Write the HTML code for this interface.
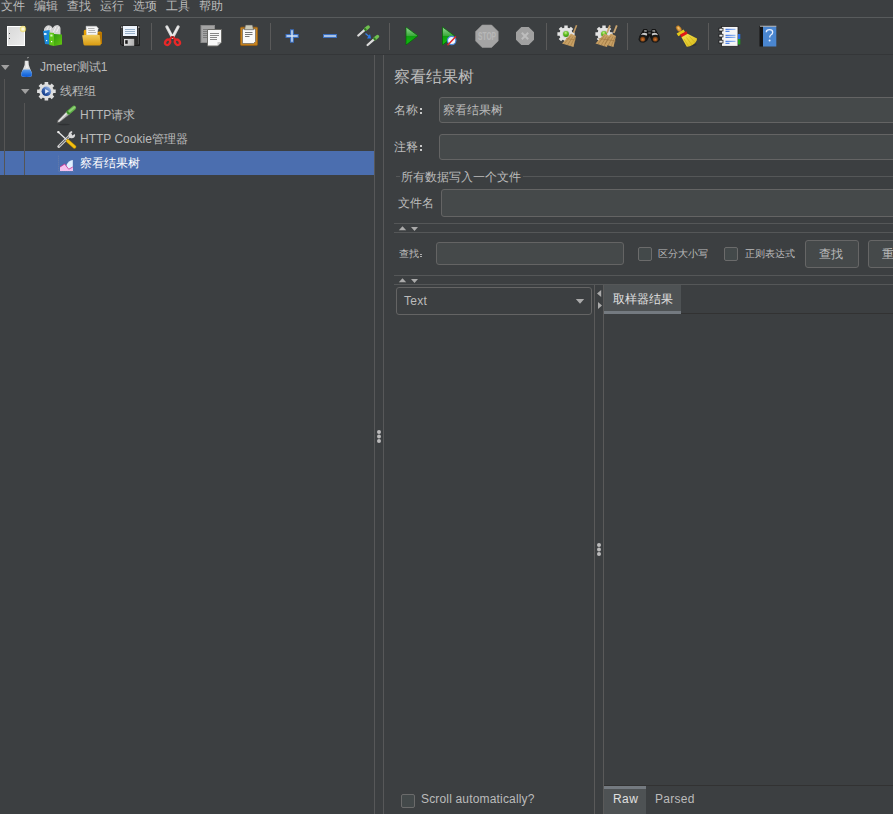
<!DOCTYPE html>
<html><head><meta charset="utf-8">
<style>
*{box-sizing:border-box}
html,body{margin:0;padding:0;width:893px;height:814px;overflow:hidden;background:#3c3f41;font-family:"Liberation Sans",sans-serif;color:#bbbbbb;font-size:12px}
.a{position:absolute;white-space:nowrap}
.hl{position:absolute;height:1px;background:#555758}
.vl{position:absolute;width:1px;background:#5a5a5a}
.ic{position:absolute;top:24px;width:24px;height:24px}
.inp{position:absolute;background:#45494a;border:1px solid #646464;border-radius:3px}
.cb{position:absolute;width:14px;height:14px;background:#43494a;border:1px solid #6b6b6b;border-radius:2px}
.tri{position:absolute;width:0;height:0}
</style></head><body>
<!-- menu -->
<div class="a" style="left:1px;top:-2px;font-size:12px;line-height:16px;color:#bbbbbb">文件</div>
<div class="a" style="left:34px;top:-2px;line-height:16px">编辑</div>
<div class="a" style="left:67px;top:-2px;line-height:16px">查找</div>
<div class="a" style="left:100px;top:-2px;line-height:16px">运行</div>
<div class="a" style="left:133px;top:-2px;line-height:16px">选项</div>
<div class="a" style="left:166px;top:-2px;line-height:16px">工具</div>
<div class="a" style="left:199px;top:-2px;line-height:16px">帮助</div>
<div class="hl" style="left:0;top:17px;width:893px;background:#585b5c"></div>
<div class="hl" style="left:0;top:54px;width:893px;background:#343638"></div>

<!-- toolbar separators -->
<div class="vl" style="left:151px;top:23px;height:27px"></div>
<div class="vl" style="left:270px;top:23px;height:27px"></div>
<div class="vl" style="left:389px;top:23px;height:27px"></div>
<div class="vl" style="left:546px;top:23px;height:27px"></div>
<div class="vl" style="left:627px;top:23px;height:27px"></div>
<div class="vl" style="left:708px;top:23px;height:27px"></div>

<!-- tree -->
<div class="a" style="left:0;top:151px;width:374px;height:24px;background:#4b6eaf"></div>
<div class="vl" style="left:4px;top:79px;height:96px;background:#555555"></div>
<div class="vl" style="left:24px;top:103px;height:72px;background:#555555"></div>
<div class="a" style="left:40px;top:59px;line-height:16px">Jmeter测试1</div>
<div class="a" style="left:60px;top:83px;line-height:16px">线程组</div>
<div class="a" style="left:80px;top:107px;line-height:16px">HTTP请求</div>
<div class="a" style="left:80px;top:131px;line-height:16px">HTTP Cookie管理器</div>
<div class="a" style="left:80px;top:155px;line-height:16px;color:#ffffff">察看结果树</div>

<!-- splitter -->
<div class="vl" style="left:374px;top:55px;height:759px;background:#575859"></div>
<div class="vl" style="left:383px;top:55px;height:759px;background:#575859"></div>

<!-- right panel -->
<div class="a" style="left:394px;top:67px;font-size:16px;line-height:20px">察看结果树</div>
<div class="a" style="left:394px;top:102px;line-height:16px">名称</div><div class="a" style="left:420px;top:108px;width:2px;height:2px;background:#c8c8c8"></div><div class="a" style="left:420px;top:112px;width:2px;height:2px;background:#c8c8c8"></div>
<div class="inp" style="left:439px;top:97px;width:470px;height:26px"></div>
<div class="a" style="left:443px;top:102px;line-height:16px">察看结果树</div>
<div class="a" style="left:394px;top:139px;line-height:16px">注释</div><div class="a" style="left:420px;top:145px;width:2px;height:2px;background:#c8c8c8"></div><div class="a" style="left:420px;top:149px;width:2px;height:2px;background:#c8c8c8"></div>
<div class="inp" style="left:439px;top:134px;width:470px;height:26px"></div>

<!-- group -->
<div class="hl" style="left:396px;top:176px;width:4px;background:#555758"></div>
<div class="hl" style="left:523px;top:176px;width:370px;background:#555758"></div>
<div class="a" style="left:401px;top:169px;line-height:16px">所有数据写入一个文件</div>
<div class="a" style="left:398px;top:195px;line-height:16px">文件名</div>
<div class="inp" style="left:441px;top:189px;width:470px;height:28px"></div>

<div class="hl" style="left:394px;top:223px;width:499px"></div>
<div class="hl" style="left:394px;top:232px;width:499px"></div>
<svg class="a" style="left:398px;top:225px" width="22" height="8"><path d="M0.8 5.2 L4.5 1.2 L8.2 5.2 Z M13 2 L20 2 L16.5 6 Z" fill="#aaaaaa"/></svg>

<!-- search -->
<div class="a" style="left:399px;top:247px;font-size:10px;line-height:14px">查找</div><div class="a" style="left:420px;top:254px;width:2px;height:1px;background:#b0b0b0"></div><div class="a" style="left:420px;top:256px;width:2px;height:1px;background:#b0b0b0"></div>
<div class="inp" style="left:436px;top:242px;width:188px;height:23px"></div>
<div class="cb" style="left:638px;top:247px"></div>
<div class="a" style="left:658px;top:247px;font-size:10px;line-height:14px">区分大小写</div>
<div class="cb" style="left:724px;top:247px"></div>
<div class="a" style="left:745px;top:247px;font-size:10px;line-height:14px">正则表达式</div>
<div class="a" style="left:805px;top:240px;width:54px;height:28px;border:1px solid #666666;border-radius:3px;background:#45494a"></div>
<div class="a" style="left:819px;top:246px;font-size:12px;line-height:16px">查找</div>
<div class="a" style="left:868px;top:240px;width:54px;height:28px;border:1px solid #666666;border-radius:3px;background:#45494a"></div>
<div class="a" style="left:882px;top:246px;font-size:12px;line-height:16px">重置</div>

<div class="hl" style="left:394px;top:275px;width:499px"></div>
<div class="hl" style="left:394px;top:284px;width:499px"></div>
<svg class="a" style="left:398px;top:277px" width="22" height="8"><path d="M0.8 5.2 L4.5 1.2 L8.2 5.2 Z M13 2 L20 2 L16.5 6 Z" fill="#aaaaaa"/></svg>

<!-- combo -->
<div class="a" style="left:396px;top:287px;width:196px;height:28px;border:1px solid #646464;border-radius:3px;background:#3c3f41"></div>
<div class="a" style="left:404px;top:293px;line-height:16px;letter-spacing:0.3px">Text</div>
<svg class="a" style="left:574px;top:297px" width="12" height="8"><path d="M1.8 2 L10.2 2 L6 6.8 Z" fill="#aaaaaa"/></svg>

<div class="vl" style="left:594px;top:285px;height:529px"></div>
<div class="vl" style="left:603px;top:285px;height:529px"></div>
<svg class="a" style="left:595px;top:288px" width="8" height="24"><path d="M6.2 2 L6.2 9 L2 5.5 Z M3 14 L3 21 L7 17.5 Z" fill="#aaaaaa"/></svg>

<!-- tab -->
<div class="a" style="left:604px;top:285px;width:77px;height:26px;background:#4e5254"></div>
<div class="a" style="left:604px;top:311px;width:77px;height:3px;background:#747a80"></div>
<div class="hl" style="left:681px;top:313px;width:212px;background:#323232"></div>
<div class="a" style="left:613px;top:291px;line-height:16px;color:#e0e0e0">取样器结果</div>

<div class="hl" style="left:604px;top:785px;width:289px;background:#323232"></div>
<div class="a" style="left:604px;top:786px;width:42px;height:28px;background:#4e5254"></div>
<div class="a" style="left:604px;top:786px;width:42px;height:3px;background:#747a80"></div>
<div class="a" style="left:613px;top:791px;line-height:16px;color:#e0e0e0;letter-spacing:0.4px">Raw</div>
<div class="a" style="left:655px;top:791px;line-height:16px;letter-spacing:0.3px">Parsed</div>

<div class="cb" style="left:401px;top:794px"></div>
<div class="a" style="left:421px;top:791px;line-height:16px;letter-spacing:0.17px">Scroll automatically?</div>

<!-- splitter dots -->
<svg class="a" style="left:376px;top:429px" width="6" height="15"><circle cx="3" cy="3" r="2" fill="#bbbbbb"/><circle cx="3" cy="7.5" r="2" fill="#bbbbbb"/><circle cx="3" cy="12" r="2" fill="#bbbbbb"/></svg>
<svg class="a" style="left:596px;top:542px" width="6" height="15"><circle cx="3" cy="3" r="2" fill="#bbbbbb"/><circle cx="3" cy="7.5" r="2" fill="#bbbbbb"/><circle cx="3" cy="12" r="2" fill="#bbbbbb"/></svg>

<!-- tree triangles -->
<svg class="a" style="left:0;top:63px" width="11" height="8"><path d="M1 2 L9.5 2 L5.25 7 Z" fill="#a0a0a0"/></svg>
<svg class="a" style="left:20px;top:87px" width="11" height="8"><path d="M1 2 L9.5 2 L5.25 7 Z" fill="#a0a0a0"/></svg>

<svg class="a" style="left:0;top:0" width="893" height="180" viewBox="0 0 893 180">
<defs>
<linearGradient id="gPage" x1="0" y1="0" x2="1" y2="1"><stop offset="0" stop-color="#d8d8d8"/><stop offset="1" stop-color="#ececec"/></linearGradient>
<linearGradient id="gFold" x1="0" y1="0" x2="0" y2="1"><stop offset="0" stop-color="#f2cc5a"/><stop offset="1" stop-color="#d89a10"/></linearGradient>
<linearGradient id="gPlay" x1="0" y1="0" x2="0" y2="1"><stop offset="0" stop-color="#98d898"/><stop offset="0.5" stop-color="#38a838"/><stop offset="0.52" stop-color="#10a010"/><stop offset="1" stop-color="#10c010"/></linearGradient>
<linearGradient id="gGreen" x1="0" y1="0" x2="1" y2="1"><stop offset="0" stop-color="#2e9a10"/><stop offset="1" stop-color="#68c810"/></linearGradient>
<linearGradient id="gFlask" x1="0" y1="0" x2="0" y2="1"><stop offset="0" stop-color="#5c9ae8"/><stop offset="0.6" stop-color="#2070e0"/><stop offset="1" stop-color="#0a58d8"/></linearGradient>
<linearGradient id="gBlueBall" x1="0.1" y1="0.9" x2="0.8" y2="0.1"><stop offset="0" stop-color="#0e3580"/><stop offset="0.5" stop-color="#3a64b0"/><stop offset="1" stop-color="#9ab8e8"/></linearGradient>
<linearGradient id="gShut" x1="0" y1="0" x2="1" y2="0"><stop offset="0" stop-color="#e0e0e0"/><stop offset="1" stop-color="#b0b0b0"/></linearGradient>
<linearGradient id="gLine" x1="0" y1="0" x2="1" y2="0"><stop offset="0" stop-color="#1a5ae0"/><stop offset="1" stop-color="#8ab4f0"/></linearGradient>
<radialGradient id="gBall" cx="0.45" cy="0.3" r="0.7"><stop offset="0" stop-color="#c8f090"/><stop offset="0.5" stop-color="#60c020"/><stop offset="1" stop-color="#3a9010"/></radialGradient>
<radialGradient id="gLens" cx="0.5" cy="0.6" r="0.6"><stop offset="0" stop-color="#d07838"/><stop offset="0.6" stop-color="#904a14"/><stop offset="1" stop-color="#4a2808"/></radialGradient>
<linearGradient id="gBroom" x1="0" y1="0" x2="1" y2="1"><stop offset="0" stop-color="#f4e450"/><stop offset="1" stop-color="#d8b818"/></linearGradient>
<radialGradient id="gStar"><stop offset="0" stop-color="#ffffff"/><stop offset="0.5" stop-color="#f8f0b0"/><stop offset="1" stop-color="#e8d040" stop-opacity="0.6"/></radialGradient>
</defs>
<!-- 1 new -->
<rect x="7.5" y="26.5" width="17" height="19" fill="url(#gPage)" stroke="#ffffff" stroke-width="1"/>
<circle cx="23" cy="29" r="3.2" fill="url(#gStar)"/>
<rect x="9" y="33" width="1" height="1" fill="#555"/><rect x="9" y="38" width="1" height="1" fill="#555"/>
<!-- 2 templates -->
<path d="M44 33 L44 29 Q45.5 25.5 49 25.2 Q51.5 25.5 52.5 28 Q54.5 24.8 57.5 25 Q60.3 25.5 60.5 28.5 L60.5 35 L44 35 Z" fill="#d2d2d2"/>
<path d="M46 32 L48.5 26.5 M49 32 L51 27.5 M53.5 32 L56 26.5 M56.5 32 L59 27" stroke="#f4f4f4" stroke-width="0.9"/>
<path d="M43 31 L49.7 30 L49.7 44.5 L45 44 Z" fill="#1a88d8"/>
<rect x="44" y="33" width="2.5" height="2" fill="#d8ecff"/><rect x="46" y="40" width="1.2" height="1.2" fill="#fff"/>
<path d="M49.3 32.5 L54 33 L54 46 L49.3 45 Z" fill="#60c818"/>
<path d="M54 34 L62 34.5 L62 44.5 L54 46 Z" fill="url(#gGreen)"/>
<rect x="50.3" y="34.5" width="2.2" height="2" fill="#d8f8c0"/><rect x="51" y="41" width="1.2" height="1.2" fill="#fff"/>
<!-- 3 open -->
<path d="M83.8 44 L83.8 31 Q84 29.8 85.5 29.8 L89.5 29.6 L90.5 34 L99.5 31.5 Q101.8 31.2 101.8 33 L101.8 44 Z" fill="#e8a000"/>
<path d="M97 33 L101.8 32 L101.8 44 L99 44 Z" fill="#b87400"/>
<path d="M86 26.2 L96.5 26.2 L98.2 28.2 L97.2 35 L86.5 35 Z" fill="#f6f6f6" stroke="#c8c8c8" stroke-width="0.4"/>
<rect x="88" y="28" width="6.5" height="1" fill="#b4b4b4"/><rect x="88.5" y="30" width="6.5" height="1" fill="#b4b4b4"/><rect x="88" y="32" width="8" height="1" fill="#b4b4b4"/>
<path d="M82.2 35.2 Q90 34.4 99.6 35 L100.9 44 Q101 45.6 99.5 45.6 L85 45.6 Q83.8 45.6 83.6 44.5 Z" fill="url(#gFold)"/>
<!-- 4 save -->
<path d="M121 26 L139.5 26 L139.5 45.5 L122 45.5 L120.5 44 Z" fill="#2a2a2a" stroke="#161616" stroke-width="0.8"/>
<path d="M121.8 28 L121.8 44 M138.5 28 L138.5 44" stroke="#4a4a4a" stroke-width="1"/>
<rect x="121" y="26.5" width="1.5" height="1.2" fill="#cccccc"/><rect x="138" y="26.5" width="1.5" height="1.2" fill="#cccccc"/>
<rect x="123" y="26" width="14" height="10" fill="#eef4fc"/>
<rect x="125" y="29" width="10" height="1" fill="#98b0c8"/><rect x="125" y="31" width="10" height="1" fill="#98b0c8"/><rect x="125" y="33" width="10" height="1" fill="#98b0c8"/>
<rect x="123.2" y="37.8" width="11" height="1" fill="#444"/>
<rect x="124" y="39" width="10.2" height="6.8" fill="url(#gShut)"/>
<rect x="125.2" y="40.2" width="2.5" height="3.6" fill="#1a1a1a"/>
<!-- 5 cut -->
<path d="M166.8 26.8 L172.5 37.5 M178.2 26.8 L172.5 37.5" stroke="#d4d4d4" stroke-width="3" stroke-linecap="round"/>
<path d="M167 27 L172.3 36.5 M178 27 L172.7 36.5" stroke="#f0f0f0" stroke-width="1.2" stroke-linecap="round"/>
<path d="M172.5 36.5 L169.5 39.5 M172.5 36.5 L175.5 39.5" stroke="#e02020" stroke-width="2.2"/>
<ellipse cx="167.6" cy="42.3" rx="2.3" ry="2.9" transform="rotate(35 167.6 42.3)" fill="none" stroke="#e82828" stroke-width="2.3"/>
<ellipse cx="177.4" cy="42.3" rx="2.3" ry="2.9" transform="rotate(-35 177.4 42.3)" fill="none" stroke="#e82828" stroke-width="2.3"/>
<circle cx="172.5" cy="37" r="0.7" fill="#333"/>
<!-- 6 copy -->
<rect x="201" y="25.5" width="13.5" height="17" fill="#a4a4a4" stroke="#8a8a8a" stroke-width="1"/>
<rect x="203" y="29" width="5" height="0.9" fill="#777"/><rect x="203" y="31" width="5" height="0.9" fill="#777"/><rect x="203" y="33" width="5" height="0.9" fill="#777"/><rect x="203" y="35" width="5" height="0.9" fill="#777"/><rect x="203" y="37" width="5" height="0.9" fill="#777"/>
<path d="M207.5 29.5 L221.5 29.5 L221.5 42 L217.5 46 L207.5 46 Z" fill="#f8f8f8" stroke="#6a6a66" stroke-width="1"/>
<path d="M217.5 46 L217.5 42 L221.5 42 Z" fill="#c8c8c8"/>
<rect x="210" y="33" width="9" height="1" fill="#888"/><rect x="210" y="35" width="9" height="1" fill="#888"/><rect x="210" y="37" width="7" height="1" fill="#888"/><rect x="210" y="39" width="7" height="1" fill="#888"/>
<!-- 7 paste -->
<rect x="240.5" y="27.2" width="17" height="18.2" rx="1" fill="#c88420" stroke="#9a6010" stroke-width="0.8"/>
<path d="M242.5 29 L255.5 29 L255.5 41.5 L253.5 43.5 L242.5 43.5 Z" fill="#fafafa" stroke="#555" stroke-width="0.6"/>
<path d="M245.5 25 L252.5 25 L253.5 29.7 L244.5 29.7 Z" fill="#c8c8b8" stroke="#555" stroke-width="0.6"/>
<rect x="245" y="32" width="7.5" height="1" fill="#777"/><rect x="245" y="34" width="7.5" height="1" fill="#777"/><rect x="245" y="36" width="4.5" height="1" fill="#777"/>
<!-- 8 plus -->
<path d="M285.5 34 H298.7 V38 H293.9 V42.7 H290 V38 H285.5 Z M290 29.2 H293.9 V34 H290 Z" fill="#3b6fc0"/>
<path d="M286.5 35.3 H297.7 V36.7 H286.5 Z M291.3 30.2 H292.7 V41.7 H291.3 Z" fill="#d8e6f6"/>
<!-- 9 minus -->
<rect x="323" y="34" width="14" height="4" fill="#3b6fc0"/>
<rect x="324" y="35.3" width="12" height="1.4" fill="#d8e6f6"/>
<!-- 10 toggle -->
<path d="M358.3 35.5 L365 29.6" stroke="#dcdcdc" stroke-width="2.3" stroke-linecap="round"/>
<path d="M365.6 29.1 L368.2 27" stroke="#70c050" stroke-width="3.4" stroke-linecap="round"/>
<path d="M364.6 30 L366 28.8" stroke="#2e7a20" stroke-width="2.6"/>
<path d="M367.6 45 L374.3 39.1" stroke="#dcdcdc" stroke-width="2.3" stroke-linecap="round"/>
<path d="M374.9 38.6 L377.5 36.5" stroke="#70c050" stroke-width="3.4" stroke-linecap="round"/>
<path d="M373.9 39.5 L375.3 38.3" stroke="#2e7a20" stroke-width="2.6"/>
<path d="M365.5 33.5 L369 36.5" stroke="#3a80e0" stroke-width="1.3"/>
<path d="M367 38.5 L371 38.5 L370 34 Z" fill="#2a78f0"/>
<!-- 11 start -->
<path d="M406 27 L418 35.8 L406 45 Z" fill="url(#gPlay)" stroke="#006a00" stroke-width="0.7"/>
<!-- 12 start no timers -->
<path d="M442.5 27 L454.5 35.8 L442.5 45 Z" fill="url(#gPlay)" stroke="#006a00" stroke-width="0.7"/>
<circle cx="451.7" cy="40.5" r="4.2" fill="#f4f8ff" stroke="#4a88d8" stroke-width="1.2"/>
<path d="M447.5 45.3 L455.9 36.4" stroke="#e02828" stroke-width="1.5"/>
<!-- 13 stop -->
<path d="M482.2 25 L491.6 25 L498.2 31.6 L498.2 40.9 L491.6 47.5 L482.2 47.5 L475.6 40.9 L475.6 31.6 Z" fill="#a4a4a4" stroke="#989898" stroke-width="0.6"/>
<text x="487" y="40" font-family="Liberation Sans" font-weight="bold" font-size="10" fill="#b8b8b8" text-anchor="middle" textLength="18" lengthAdjust="spacingAndGlyphs">STOP</text>
<!-- 14 shutdown -->
<path d="M521.3 27 L528.7 27 L534 32.3 L534 39.7 L528.7 45 L521.3 45 L516 39.7 L516 32.3 Z" fill="#a0a0a0"/>
<path d="M521.8 32.8 L528.2 39.2 M528.2 32.8 L521.8 39.2" stroke="#bdbdbd" stroke-width="2"/>
<!-- 15 clear -->
<g transform="translate(566 34)"><circle r="6.6" fill="#e4e4e4"/>
<path d="M-1.7 -8.6 H1.7 V8.6 H-1.7 Z M-8.6 -1.7 V1.7 H8.6 V-1.7 Z" fill="#e4e4e4"/>
<path d="M-1.7 -8.6 H1.7 V8.6 H-1.7 Z M-8.6 -1.7 V1.7 H8.6 V-1.7 Z" fill="#e4e4e4" transform="rotate(45)"/>
<circle r="4" fill="#d4d4d8"/><circle r="2.9" fill="url(#gBall)"/></g>
<path d="M576.6 25.3 L573.5 33" stroke="#c09860" stroke-width="1.6"/>
<path d="M571 33.5 L576 36 L573.5 46.9 L562 43.5 Z" fill="#c8a064"/>
<path d="M564.5 43.5 L571 35.5 M567.5 45 L573 36.5 M570.5 46 L575 37 M566 38.5 L576 40" stroke="#a07840" stroke-width="0.6"/>
<!-- 16 clear all -->
<g transform="translate(604 34)"><circle r="6.6" fill="#e4e4e4"/>
<path d="M-1.7 -8.6 H1.7 V8.6 H-1.7 Z M-8.6 -1.7 V1.7 H8.6 V-1.7 Z" fill="#e4e4e4"/>
<path d="M-1.7 -8.6 H1.7 V8.6 H-1.7 Z M-8.6 -1.7 V1.7 H8.6 V-1.7 Z" fill="#e4e4e4" transform="rotate(45)"/>
<circle r="4" fill="#d4d4d8"/><circle r="2.9" fill="url(#gBall)"/></g>
<path d="M610 25.3 L607 33" stroke="#c8a470" stroke-width="1.8"/>
<path d="M616.8 25.3 L613.8 33" stroke="#c8a470" stroke-width="1.8"/>
<path d="M604.5 33.5 L609.5 36 L607 46.9 L595.5 43.5 Z" fill="#c8a064"/>
<path d="M611 33.5 L616 36 L613.5 46.9 L602 43.5 Z" fill="#c8a064"/>
<path d="M598 44 L604.5 35.5 M601 45.5 L606.5 36.5 M604 46.5 L608.5 37 M605 44 L611 35.5 M608 45.5 L613 36.5 M611 46.5 L615 37 M598.5 38.5 L616 41" stroke="#9a7440" stroke-width="0.6"/>
<!-- 17 binoculars -->
<path d="M643.5 29 L647 29 L648.2 31.5 L650.8 31.5 L652 29 L655.5 29 L659.5 36 L660 40 L656 42.5 L652 41 L649.5 36 L647 41 L643 42.5 L638.5 40 L639.5 36 Z" fill="#141414"/>
<path d="M644 30.2 L646.6 30.2 L647 31.5 L644.5 31.8 Z M652.4 30.2 L655 30.2 L655.3 31.8 L652.2 31.5 Z" fill="#a8a8a8"/>
<path d="M640.8 35.2 Q642 32.8 644.5 32.8 L647.2 33.5 L647 35.5 Z M658.2 35.2 Q657 32.8 654.5 32.8 L651.8 33.5 L652 35.5 Z" fill="#c8c8c8"/>

<circle cx="642.7" cy="38.7" r="3.9" fill="#1a1a1a"/><circle cx="655.3" cy="38.7" r="3.9" fill="#1a1a1a"/>
<circle cx="642.7" cy="39" r="2.6" fill="url(#gLens)"/><circle cx="655.3" cy="39" r="2.6" fill="url(#gLens)"/>
<path d="M647.5 31.5 L651.5 31.5 L651 35.5 L648 35.5 Z" fill="#141414"/><rect x="648.3" y="32.5" width="2.4" height="1" fill="#8a8a8a"/>
<!-- 18 broom -->
<ellipse cx="690.5" cy="44.5" rx="6" ry="1.8" fill="#2a2c2e" opacity="0.6"/>
<ellipse cx="678.8" cy="28.6" rx="2.1" ry="3.1" transform="rotate(-35 678.8 28.6)" fill="#d89838" stroke="#b07020" stroke-width="0.6"/>
<ellipse cx="678.6" cy="28.3" rx="0.8" ry="1.6" transform="rotate(-35 678.6 28.3)" fill="#f0c070"/>
<path d="M676.6 33.6 L683.6 29.6 L685.2 32.2 L678.4 36.2 Z" fill="#e4c818"/>
<path d="M680 34.6 L686.4 31.2 L687.6 34 L681.6 37.4 Z" fill="#e01818"/>
<path d="M681.5 37.2 L687.6 33.8 L697 38.6 Q697.2 42 692.5 45 Q689 47 686.5 46.6 Z" fill="url(#gBroom)"/>
<path d="M684 39 L688.5 46 M686.5 37.5 L692 45 M689.5 36.5 L695 42.5" stroke="#c8a810" stroke-width="0.6"/>
<!-- 19 function helper -->
<rect x="721.5" y="26.5" width="16.5" height="19.8" fill="#f6f6f6" stroke="#222" stroke-width="0.8"/>
<rect x="738" y="34" width="2.3" height="5" fill="#2a70e0"/><rect x="738" y="39" width="2.3" height="5.5" fill="#20a020"/>
<rect x="719" y="28.2" width="4" height="2.8" fill="#e8e8e8" stroke="#111" stroke-width="0.7"/>
<rect x="719" y="34.2" width="4" height="2.8" fill="#e8e8e8" stroke="#111" stroke-width="0.7"/>
<rect x="719" y="40.2" width="4" height="2.8" fill="#e8e8e8" stroke="#111" stroke-width="0.7"/>
<rect x="725.5" y="28.8" width="10" height="1" fill="url(#gLine)"/><rect x="725.5" y="30.8" width="4" height="1" fill="#2a6ae0"/>
<rect x="725.5" y="34.8" width="10" height="1" fill="url(#gLine)"/><rect x="725.5" y="36.8" width="10" height="1" fill="url(#gLine)"/>
<rect x="725.5" y="40.8" width="10" height="1" fill="url(#gLine)"/><rect x="725.5" y="42.8" width="4" height="1" fill="#2a6ae0"/>
<!-- 20 help -->
<rect x="759.5" y="26" width="3.5" height="20.5" fill="#141414"/>
<rect x="763" y="26.5" width="13.3" height="20" fill="#4a86d0"/>
<rect x="760" y="25.8" width="16.3" height="0.8" fill="#d8d8d8"/>
<path d="M766.3 32.2 Q766.3 29.6 769.5 29.6 Q772.7 29.6 772.7 32.2 Q772.7 34 770.8 35 Q769.7 35.6 769.7 37.6" fill="none" stroke="#e8f0ff" stroke-width="1.3"/>
<circle cx="769.6" cy="40.6" r="1" fill="#e8f0ff"/>

<!-- tree icons -->
<path d="M24.8 60.8 L28.5 60.8 L28.8 65 Q29.8 68 31.5 72 Q32.6 74.8 31.5 76.2 Q30.5 77 26.6 77 Q22.6 77 21.6 76.2 Q20.6 74.8 21.7 72 Q23.5 68 24.6 65 Z" fill="#dedede"/>
<path d="M26.5 61 L27.2 61 L27.6 68 L26.3 68 Z" fill="#f8f8f8"/>
<path d="M23.4 69.6 L30 69.6 Q30.8 71 31.5 72 Q32.6 74.8 31.5 76.2 Q30.5 77 26.6 77 Q22.6 77 21.6 76.2 Q20.6 74.8 21.7 72 Q22.4 71 23.4 69.6 Z" fill="url(#gFlask)"/>
<path d="M27 58 L28.8 57.3" stroke="#9a9a9a" stroke-width="1"/>
<g transform="translate(46.4 91.3)"><circle r="7.2" fill="#dedede"/>
<path d="M-1.8 -9.3 H1.8 V9.3 H-1.8 Z M-9.3 -1.8 V1.8 H9.3 V-1.8 Z" fill="#dedede" transform="rotate(0)"/>
<path d="M-1.8 -9.3 H1.8 V9.3 H-1.8 Z M-9.3 -1.8 V1.8 H9.3 V-1.8 Z" fill="#dedede" transform="rotate(45)"/>
<circle r="4.8" fill="url(#gBlueBall)"/>
<path d="M-1.3 -2.4 L2.7 0 L-1.3 2.4 Z" fill="#e4ecf8"/></g>
<ellipse cx="64" cy="124.5" rx="6" ry="0.8" fill="#2a2c2e" opacity="0.7"/>
<path d="M57 122.8 L57.8 120.6 L66.6 111.3 L69.7 114.2 L59.6 122.3 Z" fill="#c8c8c8" stroke="#4a4a4a" stroke-width="0.6"/>
<path d="M59 120.8 L67.5 112.5" stroke="#f0f0f0" stroke-width="0.9"/>
<path d="M61 121 L68.5 113.8" stroke="#8a8a8a" stroke-width="0.6" stroke-dasharray="1 0.8"/>
<path d="M68.6 112.4 L73.9 107.9" stroke="#60b048" stroke-width="4.4" stroke-linecap="round"/>
<path d="M69.5 111.2 L74.5 107.2" stroke="#90d078" stroke-width="2" stroke-linecap="round"/>
<path d="M66.6 111.2 L69.6 114.2" stroke="#3a8a28" stroke-width="1.4"/>
<path d="M58.8 146.5 L70.5 135" stroke="#cfcfcf" stroke-width="3" stroke-linecap="round"/>
<path d="M59.6 145.7 L69.5 136" stroke="#3a3a3a" stroke-width="1" stroke-linecap="round"/>
<path d="M68.8 137 Q67.5 132.5 71.5 131 L72.5 132 L71 134 L72.5 135.5 L74.5 134 L75.2 135 Q74.5 139 70.3 138 Z" fill="#d8d8d8"/>
<path d="M58.2 132 L67.5 140.5" stroke="#e4e4e4" stroke-width="1.4" stroke-linecap="round"/>
<circle cx="58.4" cy="132.1" r="1.2" fill="#eeeeee"/>
<path d="M67.8 141 L74.5 146.8" stroke="#c09000" stroke-width="3.6" stroke-linecap="round"/>
<path d="M67.8 141 L74.5 146.8" stroke="#f4c010" stroke-width="2.4" stroke-linecap="round"/>
<path d="M58.5 155.7 V171.5 H73.8" stroke="#7888a8" stroke-width="0.6" fill="none" stroke-dasharray="1 1"/>
<path d="M66 171 L66.5 165 Q68.5 160.5 72.8 160 L72.8 171 Z" fill="#e0f0ff"/>
<path d="M60 171 L60 167 L64.7 164 L68.7 169.2 L72.8 167 L72.8 171 Z" fill="#f4c0ee"/>
<path d="M60 167 L64.7 164 L68.7 169.2 L72.8 167" stroke="#c83090" stroke-width="0.8" fill="none"/>
</svg>
</body></html>
